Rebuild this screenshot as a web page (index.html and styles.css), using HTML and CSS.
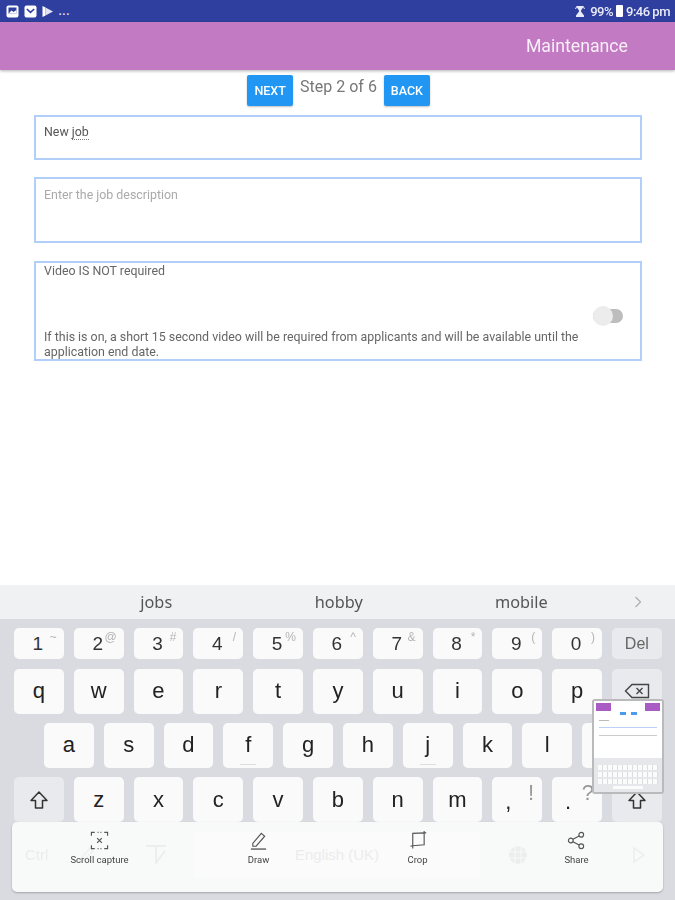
FILE: index.html
```html
<!DOCTYPE html>
<html lang="en">
<head>
<meta charset="utf-8">
<title>Maintenance</title>
<link rel="stylesheet" href="styles.css">
</head>
<body>
<div class="screen">
  <header class="status">
    <div class="status-left">
      <svg class="si" viewBox="0 0 13 13"><rect x=".5" y=".5" width="12" height="12" rx="2" fill="#fff"/><rect x="2.5" y="2.5" width="8" height="6" fill="#2f3f9f"/><path d="M2.5 8.5l3-3 2 1.5 3-2v3.5z" fill="#fff"/></svg>
      <svg class="si" viewBox="0 0 13 13"><rect x=".5" y=".5" width="12" height="12" rx="2" fill="#fff"/><path d="M2.8 4l3.7 3.4L10.2 4" fill="none" stroke="#2f3f9f" stroke-width="1.6"/></svg>
      <svg class="si" viewBox="0 0 13 13"><path d="M1.5 1v11l3-1.4V2.4z" fill="#fff"/><path d="M4.5 2.4L12 6.5l-7.5 4.1z" fill="#dfe3f5"/></svg>
      <span class="dots">...</span>
    </div>
    <div class="status-right">
      <svg class="alarm" viewBox="0 0 10 13"><path d="M1 1h8L6 5.5v1L9 10.5V12H1v-1.5L4 6.5v-1z" fill="#e8ebf7"/><path d="M0 3.5l2-1M10 3.5l-2-1" stroke="#e8ebf7"/></svg>
      <span>99%</span>
      <span class="battery"></span>
      <span>9:46 pm</span>
    </div>
  </header>
  <div class="appbar"><span>Maintenance</span></div>

  <main class="content">
    <div class="steps">
      <button class="btn">NEXT</button>
      <span class="step-label">Step 2 of 6</span>
      <button class="btn">BACK</button>
    </div>
    <div class="field field-title"><span>New <span class="typed">job</span></span></div>
    <div class="field field-desc"><span class="placeholder">Enter the job description</span></div>
    <div class="field field-video">
      <div class="video-text">
        <span>Video IS NOT required</span>
        <span>If this is on, a short 15 second video will be required from applicants and will be available until the application end date.</span>
      </div>
      <div class="toggle"><span class="knob"></span></div>
    </div>
  </main>

  <section class="keyboard">
    <div class="suggest">
      <span class="sug">jobs</span><span class="sug">hobby</span><span class="sug">mobile</span>
      <svg class="sug-more" viewBox="0 0 10 14"><path d="M2.5 2l5 5-5 5" fill="none" stroke="#aeb0b3" stroke-width="1.3"/></svg>
    </div>
    <div class="row row-num">
      <div class="key">1<i>~</i></div><div class="key">2<i>@</i></div><div class="key">3<i>#</i></div><div class="key">4<i>/</i></div><div class="key">5<i>%</i></div><div class="key">6<i>^</i></div><div class="key">7<i>&amp;</i></div><div class="key">8<i>*</i></div><div class="key">9<i>(</i></div><div class="key">0<i>)</i></div><div class="key fn del">Del</div>
    </div>
    <div class="row row-q">
      <div class="key">q</div><div class="key">w</div><div class="key">e</div><div class="key">r</div><div class="key">t</div><div class="key">y</div><div class="key">u</div><div class="key">i</div><div class="key">o</div><div class="key">p</div>
      <div class="key fn"><svg class="kicon" viewBox="0 0 26 16"><path d="M8 1.5h16.500v13H8L1.500 8z" fill="none" stroke="#444" stroke-width="1.400"/><path d="M12.500 5l6 6M18.500 5l-6 6" stroke="#444" stroke-width="1.400"/></svg></div>
    </div>
    <div class="row row-a">
      <div class="key">a</div><div class="key">s</div><div class="key">d</div><div class="key">f<b></b></div><div class="key">g</div><div class="key">h</div><div class="key">j<b></b></div><div class="key">k</div><div class="key">l</div><div class="key">'</div>
    </div>
    <div class="row row-z">
      <div class="key fn"><svg class="kicon shift" viewBox="0 0 20 20"><path d="M10 2l8 8.500h-4.500V18h-7v-7.500H2z" fill="none" stroke="#333" stroke-width="1.500" stroke-linejoin="round"/></svg></div>
      <div class="key">z</div><div class="key">x</div><div class="key">c</div><div class="key">v</div><div class="key">b</div><div class="key">n</div><div class="key">m</div><div class="key punct">,<i class="big">!</i></div><div class="key punct">.<i class="big">?</i></div>
      <div class="key fn"><svg class="kicon shift" viewBox="0 0 20 20"><path d="M10 2l8 8.500h-4.500V18h-7v-7.500H2z" fill="none" stroke="#333" stroke-width="1.500" stroke-linejoin="round"/></svg></div>
    </div>
  </section>

  <div class="capture">
    <div class="ghost">
      <span class="g-ctrl">Ctrl</span>
      <svg class="g-mic" viewBox="0 0 20 20"><path d="M3 16L14 3l3 3L6 17z" fill="none" stroke="#eff0f0" stroke-width="1.500"/></svg>
      <svg class="g-t" viewBox="0 0 24 24"><path d="M2 3h20M12 3v18M12 20l9-12" fill="none" stroke="#eceded" stroke-width="1.800"/></svg>
      <span class="g-space">English (UK)</span>
      <svg class="g-globe" viewBox="0 0 20 20"><circle cx="10" cy="10" r="9" fill="#eceded"/><path d="M1 7h18M1 13h18M7 1v18M13 1v18" stroke="#f8f9f9"/></svg>
      <svg class="g-play" viewBox="0 0 14 18"><path d="M2 2l10 7-10 7z" fill="none" stroke="#eceded" stroke-width="1.500"/></svg>
    </div>
    <div class="tool">
      <svg viewBox="0 0 20 20"><path d="M1.500 5V1.500H5M15 1.500h3.500V5M18.500 15v3.500H15M5 18.500H1.500V15" fill="none" stroke="#555" stroke-width="1.200"/><path d="M8 1.500h1M11 1.500h1M8 18.500h1M11 18.500h1M7.500 7.500l5 5M12.500 7.500l-5 5" stroke="#555" stroke-width="1.200"/></svg>
      <span>Scroll capture</span>
    </div>
    <div class="tool">
      <svg viewBox="0 0 20 20"><path d="M4 13L13 2.500l3.500 3-9 10.500H4z" fill="none" stroke="#555" stroke-width="1.200"/><path d="M2 19h16" stroke="#555" stroke-width="1.400"/></svg>
      <span>Draw</span>
    </div>
    <div class="tool">
      <svg viewBox="0 0 20 20"><path d="M5 2.500v13l12-1V2z" fill="none" stroke="#555" stroke-width="1.200"/><path d="M2.500 15.800H5v2.500M17 2h2.200M17 2V0" fill="none" stroke="#555" stroke-width="1.200"/></svg>
      <span>Crop</span>
    </div>
    <div class="tool">
      <svg viewBox="0 0 20 20"><circle cx="15" cy="4" r="2.500" fill="none" stroke="#555" stroke-width="1.200"/><circle cx="4" cy="10" r="2.500" fill="none" stroke="#555" stroke-width="1.200"/><circle cx="15" cy="16" r="2.500" fill="none" stroke="#555" stroke-width="1.200"/><path d="M6.200 8.800l6.600-3.600M6.200 11.200l6.600 3.600" stroke="#555" stroke-width="1.200"/></svg>
      <span>Share</span>
    </div>
  </div>

  <div class="thumb">
    <div class="t-top"><span class="t-bar"></span><span class="t-bar"></span></div>
    <div class="t-btns"><span></span><span></span></div>
    <div class="t-line t-line1"></div>
    <div class="t-line t-line2"></div>
    <div class="t-line t-line3"></div>
    <div class="t-space"></div>
    <div class="t-keys">
      <div class="t-row"></div><div class="t-row"></div><div class="t-row"></div><div class="t-row t-last"></div>
    </div>
  </div>
</div>
</body>
</html>
```
FILE: styles.css
```css
* { box-sizing: border-box; }
html, body { margin: 0; padding: 0; }
body { background: #fff; font-family: Roboto, "Liberation Sans", sans-serif; }

.screen {
  position: relative;
  width: 675px;
  height: 900px;
  overflow: hidden;
  display: flex;
  flex-direction: column;
  filter: blur(.4px);
}

/* status bar */
.status {
  height: 22px;
  flex: none;
  background: #2f3f9f;
  display: flex;
  justify-content: space-between;
  align-items: center;
  padding: 0 5px 0 6px;
  color: #e8ebf7;
  font-size: 13px;
  font-weight: 500;
}
.status-left { display: flex; align-items: center; gap: 4.500px; }
.si { width: 13px; height: 13px; display: block; }
.dots { line-height: 13px; font-size: 12px; letter-spacing: .5px; }
.status-right { display: flex; align-items: center; gap: 3px; letter-spacing: -.5px; }
.alarm { width: 10px; height: 13px; margin-right: 2px; }
.battery { width: 7px; height: 12px; background: #fff; border-radius: 1px; }

/* app bar */
.appbar {
  height: 48px;
  flex: none;
  background: #c27bc2;
  box-shadow: 0 1px 3px rgba(0,0,0,.3);
  display: flex;
  align-items: center;
  justify-content: flex-end;
  padding-right: 47px;
  color: #f8eef8;
  font-size: 17.700px;
  position: relative;
  z-index: 1;
}

/* content */
.content {
  flex: 1;
  min-height: 0;
  padding: 5px 33px 0 34px;
  display: flex;
  flex-direction: column;
}
.steps {
  display: flex;
  justify-content: center;
  gap: 7px;
  padding-left: 1px;
  margin-bottom: 9px;
}
.btn {
  width: 46px;
  height: 31px;
  border: 0;
  padding: 0;
  border-radius: 2px;
  background: #2196f3;
  color: #fff;
  font: 500 12.500px Roboto, sans-serif;
  box-shadow: 0 1px 2px rgba(0,0,0,.25);
}
.step-label {
  color: #777;
  font-size: 16px;
  line-height: 24px;
  padding-top: 0;
}
.field {
  border: 2px solid #b2cffa;
  font-size: 12.400px;
  color: #555;
  padding: 0 8px;
}
.field-title { height: 45px; margin-bottom: 17px; padding-top: 7px; }
.field-desc { height: 66px; margin-bottom: 18px; padding-top: 8px; }
.typed { border-bottom: 1px dotted #777; }
.placeholder { color: #aaa; }
.field-video {
  height: 100px;
  padding-top: 0;
  display: flex;
  color: #666;
  line-height: 15px;
}
.video-text {
  width: 545px;
  display: flex;
  flex-direction: column;
  justify-content: space-between;
}
.toggle {
  width: 30px;
  height: 14px;
  margin: 46px 0 0 4px;
  flex: none;
  background: #bdbdbd;
  border-radius: 7px;
  position: relative;
}
.knob {
  position: absolute;
  left: 0;
  top: -3px;
  width: 20px;
  height: 20px;
  border-radius: 50%;
  background: #ececec;
}

/* keyboard */
.keyboard {
  height: 315px;
  flex: none;
  background: #d9dbe0;
  display: flex;
  flex-direction: column;
}
.suggest {
  height: 34px;
  flex: none;
  background: #f0f1f2;
  display: flex;
  align-items: center;
  padding-left: 65px;
  margin-bottom: 9px;
  color: #555;
  font-size: 16.300px;
  font-family: "Noto Sans", Roboto, sans-serif;
}
.sug { width: 182.500px; text-align: center; }
.sug-more { width: 10px; height: 14px; margin-left: 20px; }
.row { display: flex; gap: 10px; padding-left: 14px; margin-bottom: 9.500px; flex: none; }
.row-num { height: 31px; }
.row-q { height: 45px; }
.row-a { height: 44.500px; padding-left: 44px; }
.row-z { height: 45px; }
.key {
  position: relative;
  width: 49.800px;
  flex: none;
  background: #fafafb;
  border-radius: 5px;
  display: flex;
  align-items: center;
  justify-content: center;
  color: #222;
  font-family: "Liberation Sans", Arial, sans-serif;
  font-size: 22px;
}
.row-num .key { font-size: 19px; color: #333; padding-right: 2px; }
.key i {
  position: absolute;
  top: 2px;
  right: 7px;
  font-style: normal;
  font-size: 12px;
  color: #b5b5b5;
}
.key.punct { padding-right: 18px; padding-top: 4px; }
.key i.big { font-size: 22px; top: 3px; right: 8px; color: #999; }
.key b {
  position: absolute;
  left: 17px;
  right: 17px;
  bottom: 3px;
  height: 1px;
  background: #ddd;
}
.key.fn { background: #e9eaed; color: #666; }
.row-num .key.del { font-size: 16px; padding: 0; }
.kicon { width: 26px; height: 16px; }
.kicon.shift { width: 20px; height: 20px; }

/* capture toolbar */
.capture {
  position: absolute;
  left: 12px;
  top: 822px;
  width: 651px;
  height: 70px;
  background: #f8f9f9;
  border-radius: 5px;
  box-shadow: 0 1px 2px rgba(0,0,0,.25);
  display: flex;
  padding-left: 8px;
}
.ghost {
  position: absolute;
  inset: 0;
  display: flex;
  align-items: center;
  padding-bottom: 5px;
  color: #ebecec;
  font-family: "Liberation Sans", sans-serif;
  font-size: 15px;
}
.g-ctrl { margin-left: 13px; width: 51px; }
.g-mic { width: 20px; height: 20px; margin-right: 48px; }
.g-t { width: 24px; height: 24px; margin-right: 26px; }
.g-space {
  width: 286px;
  height: 46px;
  background: #fbfbfb;
  display: flex;
  align-items: center;
  justify-content: center;
}
.g-globe { width: 20px; height: 20px; margin-left: 28px; }
.g-play { width: 14px; height: 18px; margin-left: 104px; }
.tool {
  position: relative;
  width: 159px;
  padding-top: 9px;
  display: flex;
  flex-direction: column;
  align-items: center;
  gap: 4px;
  font-size: 9.500px;
  color: #444;
}
.tool svg { width: 19px; height: 19px; }

/* screenshot thumbnail */
.thumb {
  position: absolute;
  left: 592px;
  top: 699px;
  width: 72px;
  height: 95px;
  background: #fff;
  border: 2px solid #b9babc;
  border-radius: 3px;
  padding: 2px;
  display: flex;
  flex-direction: column;
}
.t-top { display: flex; justify-content: space-between; height: 8px; }
.t-bar { width: 15px; background: #a85cc4; filter: blur(.6px); }
.t-btns { display: flex; justify-content: center; gap: 5px; margin-top: 1px; filter: blur(.6px); }
.t-btns span { width: 6px; height: 3px; background: #4a9be8; }
.t-line { height: 1px; margin: 0 3px; filter: blur(.5px); }
.t-line1 { margin-top: 5px; width: 10px; background: #bbb; }
.t-line2 { margin-top: 6px; background: #b9d2f5; }
.t-line3 { margin-top: 7px; background: #ccc; }
.t-space { flex: 1; }
.t-keys {
  height: 34px;
  margin: 0 -2px -2px;
  background: #e6e7ea;
  padding: 7px 4px 2px;
  display: flex;
  flex-direction: column;
  gap: 2px;
  filter: blur(.7px);
}
.t-row { height: 5px; background: repeating-linear-gradient(90deg, #fbfbfb 0 4px, #dcdde0 4px 5px); }
.t-last { width: 30px; align-self: center; background: #fbfbfb; height: 3px; }
```
